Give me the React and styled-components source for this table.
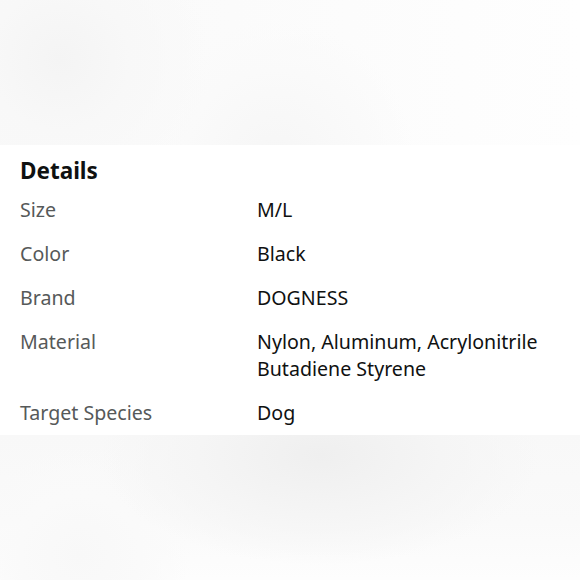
import styled, { createGlobalStyle } from 'styled-components';

const GlobalStyle = createGlobalStyle`
  html, body {
    margin: 0;
    padding: 0;
    background: #fff;
  }
  #root {
    height: 580px;
  }
`;

const rows = [
  { label: 'Size', value: 'M/L' },
  { label: 'Color', value: 'Black' },
  { label: 'Brand', value: 'DOGNESS' },
  { label: 'Material', value: 'Nylon, Aluminum, Acrylonitrile Butadiene Styrene' },
  { label: 'Target Species', value: 'Dog' },
];

const App = () => {
  return (
    <>
      <GlobalStyle />
      <Page>
        <Backdrop $top />
        <Card>
          <Heading>Details</Heading>
          <Table>
            {rows.map((row) => (
              <Row key={row.label}>
                <Label>{row.label}</Label>
                <Value>{row.value}</Value>
              </Row>
            ))}
          </Table>
        </Card>
        <Backdrop />
      </Page>
    </>
  );
};

export default App;

const Page = styled.div`
  display: flex;
  flex-direction: column;
  height: 580px;
  font-family: 'Noto Sans', 'Open Sans', sans-serif;
`;

const Backdrop = styled.div`
  flex: ${({ $top }) => ($top ? '0 0 145px' : '1')};
  background: ${({ $top }) =>
    $top
      ? `radial-gradient(circle at 60px 60px, #f4f4f4 0, #f8f8f8 70px, transparent 150px),
         radial-gradient(circle at 275px 160px, #f6f6f6 0, #fafafa 90px, transparent 140px),
         linear-gradient(90deg, #f9f9f9 0, #fbfbfb 40%, #fefefe 100%)`
      : `radial-gradient(ellipse 220px 110px at 320px 20px, #efefef 0, #f5f5f5 55%, transparent 100%),
         radial-gradient(circle at 80px 120px, #f8f8f8 0, #fafafa 60px, transparent 110px),
         linear-gradient(180deg, #f8f8f8 0, #fafafa 60%, #fdfdfd 100%)`};
`;

const Card = styled.section`
  background: #fff;
  padding: 11px 20px 9px 20px;
  color: #0f1111;
`;

const Heading = styled.h2`
  margin: 0 0 10px;
  font-size: 22.5px;
  line-height: 30px;
  font-weight: 700;
  color: #0f1111;
`;

const Table = styled.div`
  display: flex;
  flex-direction: column;
  gap: 17px;
`;

const Row = styled.div`
  display: grid;
  grid-template-columns: 237px 1fr;
  font-size: 19.6px;
  line-height: 27px;
`;

const Label = styled.div`
  color: #565959;
`;

const Value = styled.div`
  color: #0f1111;
`;
